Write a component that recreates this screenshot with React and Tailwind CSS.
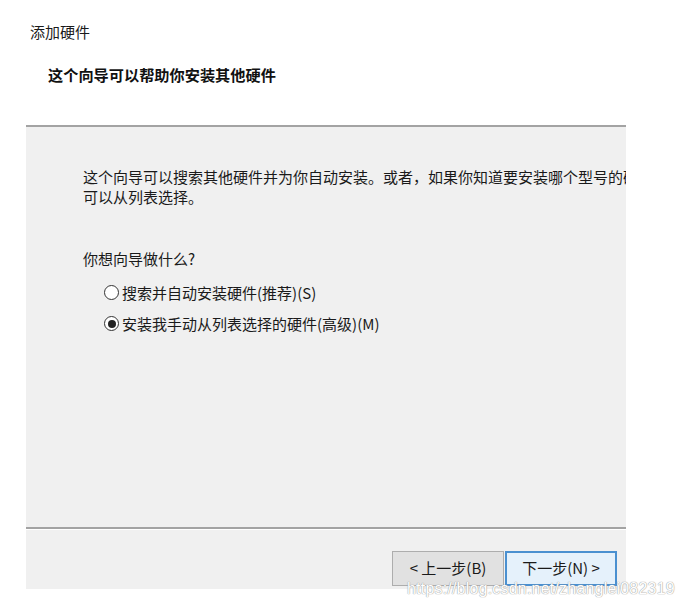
import React from 'react';

const font = { fontFamily: '"Noto Sans CJK SC", "Microsoft YaHei", sans-serif' };

function Radio({ checked, label }) {
  return (
    <label className="flex items-center h-[31px] text-[15px] text-[#1a1a1a]">
      <span className="w-[15px] h-[15px] rounded-full border border-[#333] bg-white flex items-center justify-center mr-[3px]">
        {checked && <span className="w-[8px] h-[8px] rounded-full bg-[#222]" />}
      </span>
      <span>{label}</span>
    </label>
  );
}

export default function App() {
  return (
    <div className="relative w-[676px] h-[607px] bg-white overflow-hidden" style={font}>
      {/* Header */}
      <div className="pt-[22px] pl-[30px] text-[15px] leading-[20px] text-[#1a1a1a]">添加硬件</div>
      <div className="pt-[22px] pl-[48px] text-[15.2px] leading-[20px] font-bold text-[#111]">
        这个向导可以帮助你安装其他硬件
      </div>

      {/* Body panel */}
      <div className="mt-[41px] ml-[26px] w-[600px] h-[464px] bg-[#f0f0f0] border-t-2 border-[#a3a3a3] flex flex-col overflow-hidden">
        <div className="pl-[57px] pt-[40px] text-[15px] leading-[20px] text-[#1a1a1a]">
          <div className="whitespace-nowrap">这个向导可以搜索其他硬件并为你自动安装。或者，如果你知道要安装哪个型号的硬件，也</div>
          <div>可以从列表选择。</div>
          <div className="mt-[42px]">你想向导做什么?</div>
          <div className="pl-[21px] mt-[8px] flex flex-col">
            <Radio label="搜索并自动安装硬件(推荐)(S)" />
            <Radio checked label="安装我手动从列表选择的硬件(高级)(M)" />
          </div>
        </div>

        <div className="flex-1" />

        {/* Footer */}
        <div className="border-t-2 border-[#a3a3a3]">
          <div className="border-t border-white h-[60px] flex justify-end items-start pt-[21px] pr-[9px] gap-[1px]">
            <button className="w-[112px] h-[35px] bg-[#e1e1e1] border border-[#adadad] text-[15px] text-[#1a1a1a]">
              &lt; 上一步(B)
            </button>
            <button className="w-[112px] h-[35px] bg-[#e5f1fb] border-2 border-[#4a90d0] text-[15px] text-[#1a1a1a]">
              下一步(N) &gt;
            </button>
          </div>
        </div>
      </div>

      {/* Watermark */}
      <div
        className="absolute left-[407px] top-[577px] text-[16px] text-white tracking-[0.2px] [text-shadow:0_0_1px_#9a9a9a,0_0_1px_#9a9a9a]"
        style={{ fontFamily: '"Liberation Sans", Arial, sans-serif' }}
      >
        https://blog.csdn.net/zhanglei082319
      </div>
    </div>
  );
}
